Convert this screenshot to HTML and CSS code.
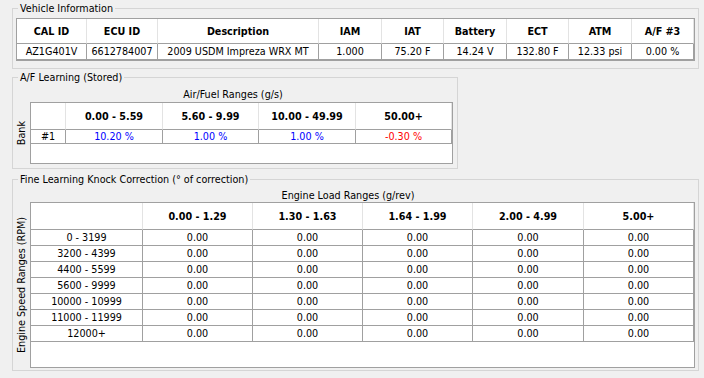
FILE: index.html
```html
<!DOCTYPE html>
<html lang="en">
<head>
  <meta charset="UTF-8" />
  <title>ECU Info</title>
  <link rel="stylesheet" href="styles.css">
</head>
<body>
  <div class="window">

    <!-- Vehicle info -->
    <fieldset class="group group-wide">
      <legend>Vehicle Information</legend>
      <div class="group-body body-vehicle">
        <div class="grid">
          <table>
            <thead>
              <tr class="head-short">
                <th style="width:70px">CAL ID</th>
                <th style="width:71px">ECU ID</th>
                <th style="width:161px">Description</th>
                <th style="width:63px">IAM</th>
                <th style="width:62px">IAT</th>
                <th style="width:63px">Battery</th>
                <th style="width:62px">ECT</th>
                <th style="width:63px">ATM</th>
                <th style="width:62px">A/F #3</th>
              </tr>
            </thead>
            <tbody>
              <tr class="row">
                <td>AZ1G401V</td>
                <td>6612784007</td>
                <td>2009 USDM Impreza WRX MT</td>
                <td>1.000</td>
                <td>75.20 F</td>
                <td>14.24 V</td>
                <td>132.80 F</td>
                <td>12.33 psi</td>
                <td>0.00 %</td>
              </tr>
            </tbody>
          </table>
        </div>
      </div>
    </fieldset>

    <!-- A/F learning -->
    <fieldset class="group group-narrow">
      <legend>A/F Learning (Stored)</legend>
      <div class="group-body body-af">
        <div class="caption">Air/Fuel Ranges (g/s)</div>
        <div class="grid-row">
          <div class="axis"><span>Bank</span></div>
          <div class="grid grid-af">
            <table>
              <thead>
                <tr class="head">
                  <th style="width:35px"></th>
                  <th style="width:97px">0.00 - 5.59</th>
                  <th style="width:96px">5.60 - 9.99</th>
                  <th style="width:97px">10.00 - 49.99</th>
                  <th style="width:96px">50.00+</th>
                </tr>
              </thead>
              <tbody>
                <tr class="row-short">
                  <td>#1</td>
                  <td class="pos">10.20 %</td>
                  <td class="pos">1.00 %</td>
                  <td class="pos">1.00 %</td>
                  <td class="neg">-0.30 %</td>
                </tr>
              </tbody>
            </table>
          </div>
        </div>
      </div>
    </fieldset>

    <!-- Knock correction -->
    <fieldset class="group group-wide group-knock">
      <legend>Fine Learning Knock Correction (° of correction)</legend>
      <div class="group-body body-knock">
        <div class="caption caption-knock">Engine Load Ranges (g/rev)</div>
        <div class="grid-row">
          <div class="axis"><span>Engine Speed Ranges (RPM)</span></div>
          <div class="grid grid-knock">
            <table>
              <thead>
                <tr class="head">
                  <th style="width:112px"></th>
                  <th style="width:110px">0.00 - 1.29</th>
                  <th style="width:110px">1.30 - 1.63</th>
                  <th style="width:110px">1.64 - 1.99</th>
                  <th style="width:111px">2.00 - 4.99</th>
                  <th style="width:110px">5.00+</th>
                </tr>
              </thead>
              <tbody>
                <tr class="row"><td>0 - 3199</td><td>0.00</td><td>0.00</td><td>0.00</td><td>0.00</td><td>0.00</td></tr>
                <tr class="row"><td>3200 - 4399</td><td>0.00</td><td>0.00</td><td>0.00</td><td>0.00</td><td>0.00</td></tr>
                <tr class="row"><td>4400 - 5599</td><td>0.00</td><td>0.00</td><td>0.00</td><td>0.00</td><td>0.00</td></tr>
                <tr class="row"><td>5600 - 9999</td><td>0.00</td><td>0.00</td><td>0.00</td><td>0.00</td><td>0.00</td></tr>
                <tr class="row"><td>10000 - 10999</td><td>0.00</td><td>0.00</td><td>0.00</td><td>0.00</td><td>0.00</td></tr>
                <tr class="row"><td>11000 - 11999</td><td>0.00</td><td>0.00</td><td>0.00</td><td>0.00</td><td>0.00</td></tr>
                <tr class="row"><td>12000+</td><td>0.00</td><td>0.00</td><td>0.00</td><td>0.00</td><td>0.00</td></tr>
              </tbody>
            </table>
          </div>
        </div>
      </div>
    </fieldset>

  </div>
</body>
</html>
```

FILE: styles.css
```css
body {
  margin: 0;
  background: #f0f0f0;
  font-family: "DejaVu Sans Condensed", "DejaVu Sans", sans-serif;
  font-size: 10.7px;
  color: #000;
}
.window {
  padding: 1px 0 0 12px;
}

/* group boxes */
.group {
  box-sizing: border-box;
  margin: 0;
  padding: 0;
  min-width: 0;
  border: 1px solid #d5d5d5;
}
.group legend {
  margin-left: 5px;
  padding: 0 2px;
  height: 15px;
  line-height: 15px;
}
.group-wide {
  width: 687px;
}
.group-narrow {
  width: 446px;
  margin-top: 1px;
}
.group-knock {
  margin-top: 3px;
}
.body-vehicle {
  padding: 2px 3px 7px 3px;
}
.body-af {
  padding: 0 4px 4px 0;
}
.body-knock {
  padding: 0 3px 2px 0;
}
.caption {
  height: 15px;
  padding-top: 2px;
  line-height: 15px;
  text-align: center;
}
.caption-knock {
  height: 14px;
  padding-top: 1px;
  line-height: 15px;
  padding-right: 12px;
}

/* rotated axis labels */
.grid-row {
  display: flex;
}
.axis {
  width: 17px;
  display: flex;
  align-items: center;
  justify-content: center;
}
.axis span {
  writing-mode: vertical-rl;
  transform: rotate(180deg);
  white-space: nowrap;
}

/* data grids */
.grid {
  flex: 1;
  background: #fff;
  border: 1px solid #a0a0a0;
}
.grid-af {
  height: 60px;
}
.grid-knock {
  height: 164px;
}
.grid table {
  border-collapse: separate;
  border-spacing: 0;
  table-layout: fixed;
  width: 100%;
}
.grid th,
.grid td {
  box-sizing: border-box;
  padding: 0 2px;
  text-align: center;
  white-space: nowrap;
  overflow: hidden;
}
.grid th {
  font-weight: bold;
  border-right: 1px solid #e3e3e3;
  border-bottom: 1px solid #a0a0a0;
}
.grid td {
  border-right: 1px solid #a0a0a0;
  border-bottom: 1px solid #a0a0a0;
}
.head-short {
  height: 25px;
}
.head {
  height: 27px;
}
.row {
  height: 16px;
}
.row-short {
  height: 14px;
}
.pos {
  color: #0000ff;
}
.neg {
  color: #ff0000;
}
```
